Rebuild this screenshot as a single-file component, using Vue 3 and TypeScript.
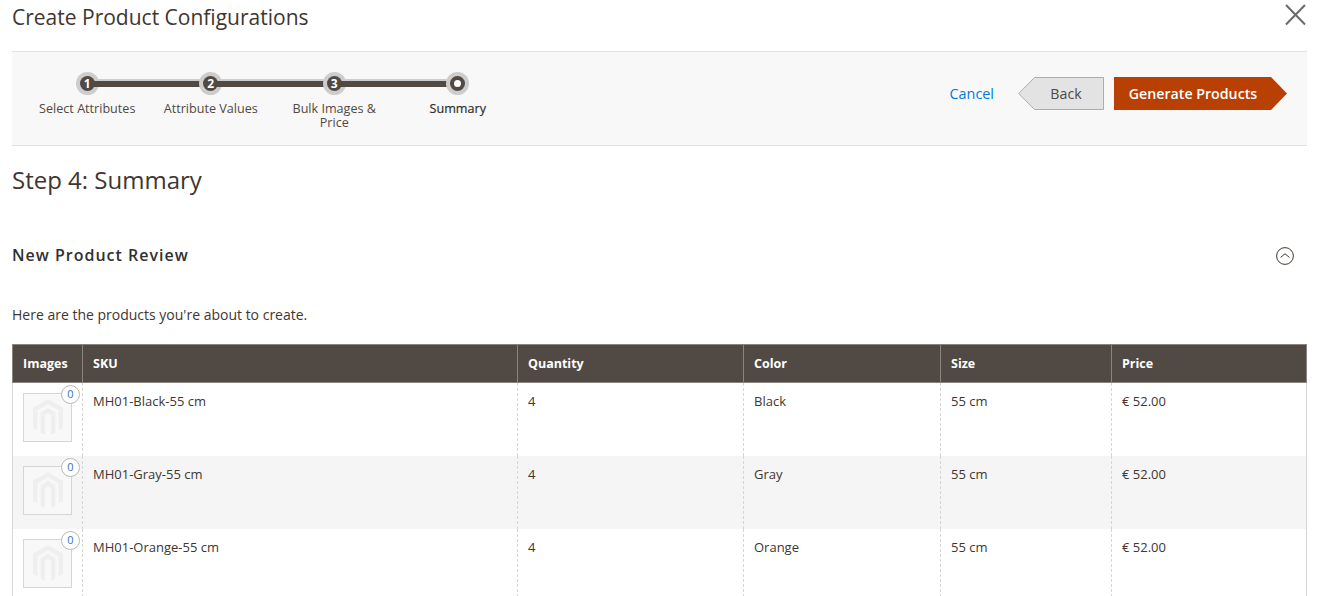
<script setup lang="ts">
const steps = [
  { n: '1', label: 'Select Attributes' },
  { n: '2', label: 'Attribute Values' },
  { n: '3', label: 'Bulk Images & Price' },
  { n: '', label: 'Summary' },
]
const columns = ['Images', 'SKU', 'Quantity', 'Color', 'Size', 'Price']
const rows = [
  { sku: 'MH01-Black-55 cm', color: 'Black' },
  { sku: 'MH01-Gray-55 cm', color: 'Gray' },
  { sku: 'MH01-Orange-55 cm', color: 'Orange' },
]
</script>

<template>
  <div class="page">
    <header class="title-row">
      <h1>Create Product Configurations</h1>
      <svg class="close" width="22" height="22" viewBox="0 0 22 22" aria-hidden="true">
        <path d="M1 1 L20 20.5 M20 1 L1 20.5" stroke="#6d6a67" stroke-width="2" fill="none" />
      </svg>
    </header>

    <section class="wizard">
      <ol class="steps">
        <li v-for="(s, i) in steps" :key="s.label" class="step" :class="{ active: i === 3 }">
          <span class="dot">
            <span class="dot-inner">{{ s.n }}</span>
          </span>
          <span class="label">{{ s.label }}</span>
        </li>
      </ol>
      <div class="actions">
        <a class="cancel">Cancel</a>
        <button class="btn back">
          <svg class="shape" width="86" height="33" viewBox="0 0 86 33" aria-hidden="true">
            <polygon points="16.5,0.5 85.5,0.5 85.5,32.5 16.5,32.5 0.7,16.5" fill="#e3e3e3" stroke="#adadad" />
          </svg>
          <span>Back</span>
        </button>
        <button class="btn next">
          <svg class="shape" width="173" height="33" viewBox="0 0 173 33" aria-hidden="true">
            <polygon points="0,0 157,0 173,16.5 157,33 0,33" fill="#b84002" />
          </svg>
          <span>Generate Products</span>
        </button>
      </div>
    </section>

    <h2 class="step-title">Step 4: Summary</h2>

    <div class="review-head">
      <h3>New Product Review</h3>
      <svg class="toggle" width="18" height="18" viewBox="0 0 18 18" aria-hidden="true">
        <circle cx="9" cy="9" r="8.4" fill="none" stroke="#41362f" stroke-width="1" />
        <path d="M4.6 10.4 L9 6.8 L13.4 10.4" fill="none" stroke="#41362f" stroke-width="1" />
      </svg>
    </div>

    <p class="intro">Here are the products you're about to create.</p>

    <table class="grid">
      <colgroup>
        <col style="width: 71px" />
        <col style="width: 435px" />
        <col style="width: 226px" />
        <col style="width: 197px" />
        <col style="width: 171px" />
        <col style="width: 195px" />
      </colgroup>
      <thead>
        <tr>
          <th v-for="c in columns" :key="c">{{ c }}</th>
        </tr>
      </thead>
      <tbody>
        <tr v-for="(r, i) in rows" :key="r.sku" :class="{ odd: i % 2 === 1 }">
          <td class="img-cell">
            <div class="thumb">
              <svg width="30" height="38" viewBox="0 0 30 38" aria-hidden="true">
                <path
                  d="M15 0 L30 8.7 V29 L25.5 31.6 V11.3 L15 5.2 L4.5 11.3 V31.6 L0 29 V8.7 Z M15 9 L22.5 13.2 V33.4 L18 36 V15.8 L15 14.2 L12 15.8 V36 L7.5 33.4 V13.2 Z"
                  fill="#efefef"
                />
              </svg>
              <span class="count">0</span>
            </div>
          </td>
          <td>{{ r.sku }}</td>
          <td>4</td>
          <td>{{ r.color }}</td>
          <td>55 cm</td>
          <td>€ 52.00</td>
        </tr>
      </tbody>
    </table>
  </div>
</template>

<style>
html, body {
  margin: 0;
  background: #fff;
  overflow: hidden;
}
</style>

<style scoped>
.page {
  height: 596px;
  overflow: hidden;
  box-sizing: border-box;
  padding: 0 12px;
  font-family: "Open Sans", "Liberation Sans", sans-serif;
  color: #41362f;
  font-size: 13px;
}
.title-row {
  height: 51px;
  display: flex;
  justify-content: space-between;
  align-items: flex-start;
}
h1 {
  margin: 3px 0 0;
  font-size: 21px;
  line-height: 28px;
  font-weight: 400;
  color: #41362f;
}
.close {
  margin: 4px 0 0;
}
.wizard {
  height: 93px;
  display: flex;
  justify-content: space-between;
  background: #f8f8f8;
  border-top: 1px solid #e3e3e3;
  border-bottom: 1px solid #e3e3e3;
}
.steps {
  list-style: none;
  margin: 0;
  padding: 20px 0 0 13.5px;
  display: flex;
  align-items: flex-start;
}
.step {
  position: relative;
  width: 123.5px;
  display: flex;
  flex-direction: column;
  align-items: center;
  text-align: center;
}
.step:not(:last-child)::after {
  content: "";
  position: absolute;
  left: 50%;
  width: 100%;
  top: 7px;
  height: 8px;
  background: #514943;
  border-top: 2px solid #cdcdcd;
  box-sizing: border-box;
}
.dot {
  width: 23px;
  height: 23px;
  border-radius: 50%;
  background: #cdcdcd;
  display: flex;
  align-items: center;
  justify-content: center;
}
.dot-inner {
  position: relative;
  z-index: 1;
  width: 15px;
  height: 15px;
  border-radius: 50%;
  background: #514943;
  color: #fff;
  font-size: 12px;
  font-weight: 700;
  line-height: 15px;
}
.step.active .dot-inner {
  box-sizing: border-box;
  border: 4px solid #514943;
  background: #fff;
}
.label {
  width: 97px;
  margin-top: 7px;
  font-size: 12.6px;
  line-height: 14px;
  color: #514943;
}
.step.active .label {
  color: #303030;
  font-weight: 400;
  -webkit-text-stroke: 0.2px #303030;
}
.actions {
  display: flex;
  align-items: flex-start;
  padding-top: 25px;
  padding-right: 20px;
}
.cancel {
  margin-top: 6px;
  margin-right: 24px;
  font-size: 14.4px;
  line-height: 22px;
  color: #007bdb;
}
.btn {
  position: relative;
  height: 33px;
  padding: 0;
  border: 0;
  background: none;
  font-family: inherit;
  font-size: 14.2px;
  line-height: 33px;
}
.btn span {
  position: relative;
}
.shape {
  position: absolute;
  left: 0;
  top: 0;
}
.back {
  width: 86px;
  margin-right: 10px;
  color: #514943;
  padding-left: 10px;
}
.next {
  width: 173px;
  color: #fff;
  font-weight: 600;
  padding-right: 15px;
}
.step-title {
  margin: 0;
  padding-top: 18px;
  height: 69px;
  box-sizing: border-box;
  font-size: 24px;
  line-height: 32px;
  font-weight: 400;
  color: #41362f;
}
.review-head {
  height: 80px;
  display: flex;
  justify-content: space-between;
  align-items: center;
  padding-right: 13px;
}
h3 {
  margin: 0;
  font-size: 16px;
  font-weight: 600;
  letter-spacing: 1px;
  color: #303030;
}
.toggle {
  margin-top: 1px;
}
.intro {
  margin: 0;
  padding-top: 10px;
  box-sizing: border-box;
  font-size: 14px;
  line-height: 20px;
  height: 49px;
  color: #41362f;
}
.grid {
  width: 1295px;
  table-layout: fixed;
  border-collapse: separate;
  border-spacing: 0;
  font-size: 13px;
}
th {
  height: 39px;
  box-sizing: border-box;
  padding: 0 10px;
  text-align: left;
  font-size: 12.5px;
  font-weight: 700;
  color: #fff;
  background: #514943;
  border-top: 1px solid #8a837f;
  border-bottom: 1px solid #8a837f;
  border-right: 1px solid #8a837f;
}
th:first-child { border-left: 1px solid #8a837f; }
td {
  height: 73px;
  box-sizing: border-box;
  padding: 9px 10px 0;
  vertical-align: top;
  line-height: 18px;
  color: #41362f;
  border-right: 1px dashed #d6d6d6;
}
td:first-child { border-left: 1px solid #d6d6d6; }
td:last-child { border-right: 1px solid #d6d6d6; }
tr.odd td { background: #f5f5f5; }
.img-cell {
  padding: 10px 10px 0;
}
.thumb {
  position: relative;
  width: 49px;
  height: 49px;
  box-sizing: border-box;
  border: 1px solid #d6d6d6;
  background: #f8f8f8;
  display: flex;
  align-items: center;
  justify-content: center;
}
.count {
  position: absolute;
  top: -9px;
  right: -9px;
  width: 19px;
  height: 19px;
  box-sizing: border-box;
  border: 1px solid #b8b8b8;
  border-radius: 50%;
  background: #fff;
  color: #2f78b8;
  font-size: 11px;
  line-height: 16px;
  text-align: center;
}
</style>
